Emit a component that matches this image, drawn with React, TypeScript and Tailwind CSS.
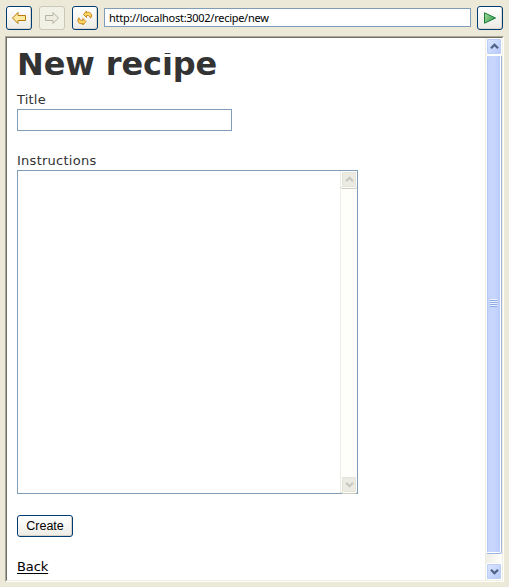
import type { ReactNode } from "react";

function ToolButton({ children, disabled = false }: { children: ReactNode; disabled?: boolean }) {
  return (
    <button
      className={
        disabled
          ? "flex h-6 w-[26px] items-center justify-center rounded-[3px] border border-[#c9c7ba] bg-[#f2f1e6]"
          : "flex h-6 w-[26px] items-center justify-center rounded-[3px] border border-[#003c74] bg-linear-to-b from-white to-[#ecebe4] shadow-[inset_-1px_-1px_0_#dcd8ce]"
      }
    >
      {children}
    </button>
  );
}

function ArrowIcon({ stroke, fill, flip = false }: { stroke: string; fill: string; flip?: boolean }) {
  return (
    <svg width="16" height="14" viewBox="0 0 16 14" className={flip ? "-scale-x-100" : ""}>
      <path d="M1.5 7 L7 1.5 V4.5 H14.5 V9.5 H7 V12.5 Z" fill={fill} stroke={stroke} strokeLinejoin="round" />
    </svg>
  );
}

function RefreshIcon() {
  return (
    <svg width="16" height="16" viewBox="0 0 16 16" fill="#ffd766" stroke="#c27c0e" strokeWidth="0.9" strokeLinejoin="round">
      <path d="M6.5 4.5 L9.5 1 V2.6 C12.5 1.6 14.6 3.2 14.6 6 L13.5 8.2 C13.2 6.3 12 5.2 9.5 5.6 V7.5 Z" />
      <path d="M8.9 11.5 L5.9 15 V13.4 C2.9 14.4 0.9 12.8 0.9 10 L2 7.8 C2.3 9.7 3.5 10.8 5.9 10.4 V8.5 Z" />
    </svg>
  );
}

function Chevron({ color, down = false }: { color: string; down?: boolean }) {
  return (
    <svg width="9" height="7" viewBox="0 0 9 7" className={down ? "rotate-180" : ""}>
      <path d="M1 5.2 L4.5 1.7 L8 5.2" fill="none" stroke={color} strokeWidth="2.2" />
    </svg>
  );
}

function ScrollButton({ down = false }: { down?: boolean }) {
  return (
    <div className="ml-px flex h-[17px] w-4 shrink-0 items-center justify-center rounded-[2px] border border-white bg-linear-to-br from-[#dce6ff] to-[#b4c8f8] shadow-[inset_0_0_0_1px_#bdcef6]">
      <Chevron color="#4d6185" down={down} />
    </div>
  );
}

function DisabledScrollButton({ down = false }: { down?: boolean }) {
  return (
    <div className="flex h-[17px] w-4 shrink-0 items-center justify-center rounded-[2px] border border-white bg-[#ebebe3] shadow-[inset_0_0_0_1px_#e4e3da,0_1px_0_#cfcdbc]">
      <Chevron color="#c8c8c1" down={down} />
    </div>
  );
}

function PageScrollbar() {
  return (
    <div className="flex h-[542px] w-[17px] shrink-0 flex-col bg-linear-to-r from-[#eeede5] to-[#fefefb]">
      <ScrollButton />
      <div className="ml-px flex h-[499px] w-4 flex-col items-center justify-center rounded-[2px] border border-white border-r-[#9fb5df] border-b-[#9cb5e7] bg-linear-to-r from-[#c3d3fc] via-[#c8d6fb] to-[#b7cafb] pr-px pb-1 shadow-[inset_-1px_-1px_0_white,inset_1px_0_0_#b3c8f6]">
        <div className="flex flex-col">
          {[0, 1, 2, 3].map((line) => (
            <span key={line} className="h-0.5 w-[7px] border-t border-b border-t-[#eef4fe] border-b-[#8caae8]" />
          ))}
        </div>
      </div>
      <div className="flex-1" />
      <ScrollButton down />
    </div>
  );
}

export default function App() {
  return (
    <div className="h-[587px] w-[509px] overflow-hidden bg-[#ece9d8] text-[#333]">
      <div className="flex h-9 items-start pt-1.5 pl-1.5">
        <ToolButton><ArrowIcon stroke="#b87a0c" fill="#ffe9a0" /></ToolButton>
        <div className="ml-[7px]">
          <ToolButton disabled><ArrowIcon stroke="#b5b4a3" fill="#edecdf" flip /></ToolButton>
        </div>
        <div className="ml-[7px]"><ToolButton><RefreshIcon /></ToolButton></div>
        <div className="mt-0.5 ml-1.5 flex h-[19px] w-[367px] items-center border border-[#7f9db9] bg-white pt-px pl-1 font-['Noto_Sans',sans-serif] text-[11px] whitespace-nowrap text-black">
          <span className="tracking-[-0.28px]">http://localhost:3002/recipe/new</span>
        </div>
        <div className="ml-1.5">
          <ToolButton>
            <svg width="14" height="12" viewBox="0 0 14 12">
              <defs>
                <linearGradient id="play" x1="0" y1="0" x2="1" y2="0.6">
                  <stop offset="0" stopColor="#a8dca0" />
                  <stop offset="1" stopColor="#38a050" />
                </linearGradient>
              </defs>
              <path d="M1.5 0.8 L12.5 6 L1.5 11.2 Z" fill="url(#play)" stroke="#187b36" strokeLinejoin="round" />
            </svg>
          </ToolButton>
        </div>
      </div>
      <div className="ml-[5px] h-[546px] w-[499px] border border-t-[#aca899] border-r-white border-b-white border-l-[#aca899]">
        <div className="flex h-[544px] w-[497px] border border-t-[#716f64] border-r-[#f1efe2] border-b-[#f1efe2] border-l-[#716f64] bg-white">
          <main className="w-[478px] pl-2.5 font-['DejaVu_Sans',Verdana,sans-serif] text-[13px]">
            <h1 className="relative mt-[15px] h-[38px] overflow-hidden text-[32px] leading-[22px] font-bold tracking-[-0.1px] whitespace-nowrap">
              New recipe
              <span className="absolute top-px left-[147px] h-[3px] w-[10px] bg-white" />
            </h1>
            <label className="block h-[18px] leading-[18px] tracking-[0.2px]">Title</label>
            <input className="block h-[22px] w-[215px] border border-[#7f9db9] bg-white" />
            <label className="mt-[21px] block h-[18px] leading-[18px] tracking-[0.26px]">Instructions</label>
            <div className="flex h-[324px] w-[341px] justify-end border border-[#7f9db9]">
              <div className="flex w-[17px] flex-col justify-between border-l border-[#eeede5] bg-[#fefefb]">
                <DisabledScrollButton />
                <DisabledScrollButton down />
              </div>
            </div>
            <button className="mt-[21px] block h-[22px] w-[56px] rounded-[3px] border border-[#003c74] bg-linear-to-b from-white to-[#ecebe5] font-['Liberation_Sans',Arial,sans-serif] text-[12.5px] leading-[20px] text-black shadow-[inset_-1px_-1px_0_#d6d0c5]">Create</button>
            <a className="mt-[21px] block h-[18px] leading-[18px] tracking-[-0.1px] text-black underline underline-offset-2">Back</a>
          </main>
          <PageScrollbar />
        </div>
      </div>
    </div>
  );
}
